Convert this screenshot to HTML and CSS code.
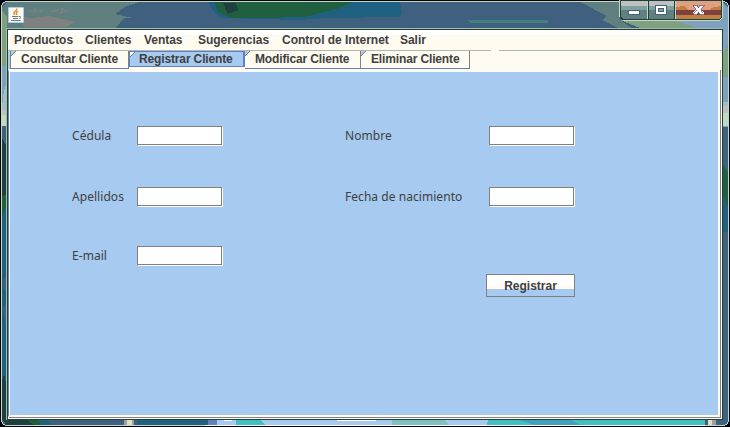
FILE: index.html
```
<!DOCTYPE html>
<html lang="es">
<head>
<meta charset="utf-8">
<title>Registrar Cliente</title>
<link rel="stylesheet" href="styles.css">
</head>
<body>
<div class="window">
  <svg class="glass" width="730" height="427" viewBox="0 0 730 427" shape-rendering="crispEdges" aria-hidden="true">
    <rect width="730" height="427" fill="#000010"/>
    <rect x="1" y="1" width="728" height="425" rx="6" fill="#c0dcc0"/>
    <rect x="2" y="2" width="726" height="423" rx="5" fill="#406080"/>
    <path d="M7 2H139L125 7 115 14 133 18H124L116 28H2V8Z" fill="#608080"/>
    <path d="M20 16L31 18 50 16 75 22 66 27H24Z" fill="#808080"/>
    <path d="M28 12L36 9 34 12 42 10 40 13M51 12L64 8 60 13 69 10" fill="none" stroke="#808080"/>
    <path d="M208 2H400L402 12 400 17 325 18 300 20 221 18 214 12Z" fill="#206080"/>
    <path d="M214 2H353L337 9 320 13 305 17 258 18 231 18 218 12Z" fill="#206040"/>
    <path d="M223 3H236L238 10 228 14Z" fill="#204040"/>
    <path d="M467 20H548V23H470Z" fill="#408080"/>
    <path d="M580 2H620V20L632 28H618L602 20 607 16Z" fill="#608080"/>
    <path d="M620 20H722V28H640Z" fill="#80a080"/>
    <path d="M675 21H700L723 2 728 8V28H698Z" fill="#80a0c0"/>
    <path d="M2 10L7 17V66H2Z" fill="#80a080"/>
    <path d="M2 66H7V92L4 108H2Z" fill="#80a0c0"/>
    <path d="M2 108L4 90 7 83V110H2Z" fill="#a0c0c0"/>
    <path d="M2 110H7V115H2Z" fill="#c0c0c0"/>
    <path d="M2 115H7V126H2Z" fill="#c0dcc0"/>
    <path d="M2 126H7V145L2 137Z" fill="#406080"/>
    <path d="M2 138L7 147V200H2Z" fill="#204040"/>
    <path d="M2 196L6 195V213L2 217Z" fill="#206040"/>
    <path d="M2 217L7 204V420H2Z" fill="#206080"/>
    <path d="M3 279L6 276V290L3 288ZM3 308L6 304V324L4 317Z" fill="#406080"/>
    <path d="M2 381L4 374 7 387V424L2 420Z" fill="#204040"/>
    <path d="M723 28H728V127H723Z" fill="#80a0c0"/>
    <path d="M723 54L728 44V77H723Z" fill="#80a080"/>
    <path d="M723 102H728V106H723Z" fill="#a0c0c0"/>
    <path d="M723 106H728V113H723Z" fill="#c0c0c0"/>
    <path d="M723 113H728V126H723Z" fill="#c0dcc0"/>
    <path d="M723 164L728 173V212H723Z" fill="#206040"/>
    <path d="M723 196L728 207V232H723Z" fill="#206080"/>
    <rect x="5" y="420" width="32" height="5" fill="#204040"/>
    <path d="M27 420H43L46 425H34Z" fill="#206040"/>
    <path d="M37 420H47L53 425H43Z" fill="#206080"/>
    <rect x="137" y="420" width="76" height="5" fill="#206080"/>
    <rect x="124" y="420" width="10" height="5" fill="#a0a0a4"/>
    <rect x="127" y="420" width="5" height="5" fill="#e0dfc0"/>
    <rect x="208" y="420" width="14" height="5" fill="#6080c0"/>
    <rect x="217" y="420" width="488" height="5" fill="#a6caf0"/>
    <path d="M236 420H261L265 425H236Z" fill="#40c0c0"/>
    <path d="M392 420H444L449 425H392Z" fill="#80c0c0"/>
    <path d="M488 420H705V425H487Z" fill="#40c0c0"/>
    <path d="M520 420H571L581 425H534Z" fill="#40a0c0"/>
    <rect x="708" y="420" width="4" height="5" fill="#e0dfc0"/>
    <rect x="712" y="420" width="4" height="5" fill="#a0a0a4"/>
    <rect x="205" y="425" width="500" height="1" fill="#fff"/>
    <rect x="6.5" y="28.5" width="716" height="391" fill="none" stroke="#a0c0a0"/>
    <path d="M224 420.500H232M337 420.500H376" stroke="#fff"/>
  </svg>
  <header class="titlebar">
    <svg class="java" width="16" height="16" viewBox="0 0 16 16" aria-label="Java">
      <rect width="16" height="16" rx="1" fill="#a6caf0"/>
      <rect x="1" y="1" width="14" height="14" fill="#fffbf0"/>
      <path d="M9 1.500Q9 3 7 4.500T6.500 8M10 4Q7.500 5 8.500 8" fill="none" stroke="#e08020" stroke-width="1.2"/>
      <path d="M4 9.500H10.500M5 11.500H10M3 13.500H12.500M11 9.500Q14 9 11.500 12" fill="none" stroke="#608080"/>
    </svg>
    <svg class="controls" width="104" height="21" viewBox="0 0 104 21" shape-rendering="crispEdges" aria-label="Controles de ventana">
      <path d="M0 0H104V17L100 21H4L0 17Z" fill="#c0dcc0"/>
      <path d="M1 0H103V17L100 20H3L1 17Z" fill="#204040"/>
      <path d="M2 1H28V19H4L2 17ZM30 1H55V19H30Z" fill="#608080"/>
      <path d="M2 1H28V6H2ZM30 1H55V6H30Z" fill="#c0c0c0"/>
      <path d="M2 6H28V10H2ZM30 6H55V10H30Z" fill="#80a0a0"/>
      <path d="M57 1H102V17L100 19H57Z" fill="#c08040"/>
      <path d="M57 1H102V10H57Z" fill="#e0a080"/>
      <path d="M57 7L65 6 70 10H57ZM102 6L95 7 90 10H102Z" fill="#c08040"/>
      <path d="M57 10H102V15H57Z" fill="#804040"/>
      <path d="M28.5 1V19M56.5 1V19" stroke="#c0dcc0"/>
      <rect x="9.5" y="10.5" width="11" height="4" fill="#fff" stroke="#406080"/>
      <path d="M36.500 5.500H47.500V14.500H36.500Z" fill="#fff" stroke="#406080"/>
      <rect x="39.500" y="8.500" width="5" height="3" fill="#80a0a0" stroke="#406080"/>
      <path d="M74 5H78L79.500 7.500 81 5H85V6L82 9.500 85 13V14.500H81L79.500 12 78 14.500H74V13L77 9.500 74 6Z" fill="#fff" stroke="#604060" stroke-width=".7"/>
    </svg>
  </header>
  <main class="client">
    <nav class="menu">
      <span class="m1">Productos</span><span class="m2">Clientes</span><span class="m3">Ventas</span><span class="m4">Sugerencias</span><span class="m5">Control de Internet</span><span class="m6">Salir</span>
    </nav>
    <div class="tabs">
      <div class="tab t1">Consultar Cliente</div><div class="tab t2">Registrar Cliente</div><div class="tab t3">Modificar Cliente</div><div class="tab t4">Eliminar Cliente</div>
    </div>
    <form class="panel">
      <label for="cedula">Cédula</label><input id="cedula"><label for="nombre">Nombre</label><input id="nombre">
      <label for="apellidos">Apellidos</label><input id="apellidos"><label for="fecha">Fecha de nacimiento</label><input id="fecha">
      <label for="email">E-mail</label><input id="email">
      <button type="button">Registrar</button>
    </form>
  </main>
</div>
</body>
</html>
```
FILE: styles.css
```
* { box-sizing: border-box; }
body { margin: 0; overflow: hidden; }
.window { position: relative; width: 730px; height: 427px; font: bold 12px "Liberation Sans", sans-serif; color: #404040; }
.glass { position: absolute; inset: 0; z-index: -1; }
.titlebar { display: flex; justify-content: space-between; height: 29px; padding: 0 7px 0 8px; }
.java { margin-top: 7px; }
.controls { display: block; }
.client { width: 716px; height: 391px; margin-left: 7px; border: 1px solid #204040; background: #fffbf0; }
.menu { display: flex; height: 21px; padding-left: 6px; line-height: 20px; letter-spacing: -.03px; background: linear-gradient(#fff 5px, #fffbf0 5px); border-bottom: 1px solid; border-image: linear-gradient(90deg, #b0b8b0 483px, #fffbf0 483px 491px, #b0b8b0 491px) 1; white-space: nowrap; }
.m1 { width: 71px; } .m2 { width: 59px; } .m3 { width: 54px; } .m4 { width: 84px; } .m5 { width: 118px; }
.tabs { display: flex; height: 18px; padding-left: 2px; letter-spacing: -.14px; background: linear-gradient(90deg, #a6caf0 2px, transparent 2px); }
.tab { height: 18px; padding-left: 10px; border-right: 1px solid #808080; border-bottom: 1px solid #6080c0; line-height: 16px; white-space: nowrap; background: linear-gradient(135deg, #a6caf0 3px, #808080 3px 4px, #fffbf0 4px); }
.t1 { width: 119px; border-left: 1px solid #808080; }
.t2 { width: 116px; height: 16px; border: 1px solid #6080c0; border-right-width: 2px; background: linear-gradient(135deg, #fffbf0 3px, #6080c0 3px 4px, #a6caf0 4px); padding-left: 9px; line-height: 14px; }
.t3 { width: 116px; }
.t4 { width: 109px; }
.panel { display: grid; grid-template-columns: 65px 208px 144px 86px; grid-template-rows: 61px 59px 28px 23px; align-items: start; width: 712px; height: 348px; margin: 0; padding: 54px 0 0 63px; border: 0 solid #fffbf0; border-width: 3px 2px 2px 1px; border-left-color: #6080c0; background: #a6caf0; box-shadow: inset 1px 0 #fff, 1px 1px #808080; }
label { font: 12px/16px "Noto Sans", sans-serif; letter-spacing: .05px; padding-top: 2px; white-space: nowrap; }
input { width: 86px; height: 20px; padding: 0; border: 1px solid #808080; border-right-color: #fff; border-bottom-color: #fff; border-radius: 0; background: #fff; box-shadow: inset -1px -1px #808080; outline: 0; }
button { grid-column: 3 / 5; grid-row: 4; justify-self: end; width: 89px; height: 23px; padding: 0; border: 1px solid #808080; background: linear-gradient(#fff 10px, #fffbf0 10px 14px, #a6caf0 14px); font: inherit; color: inherit; }
```
